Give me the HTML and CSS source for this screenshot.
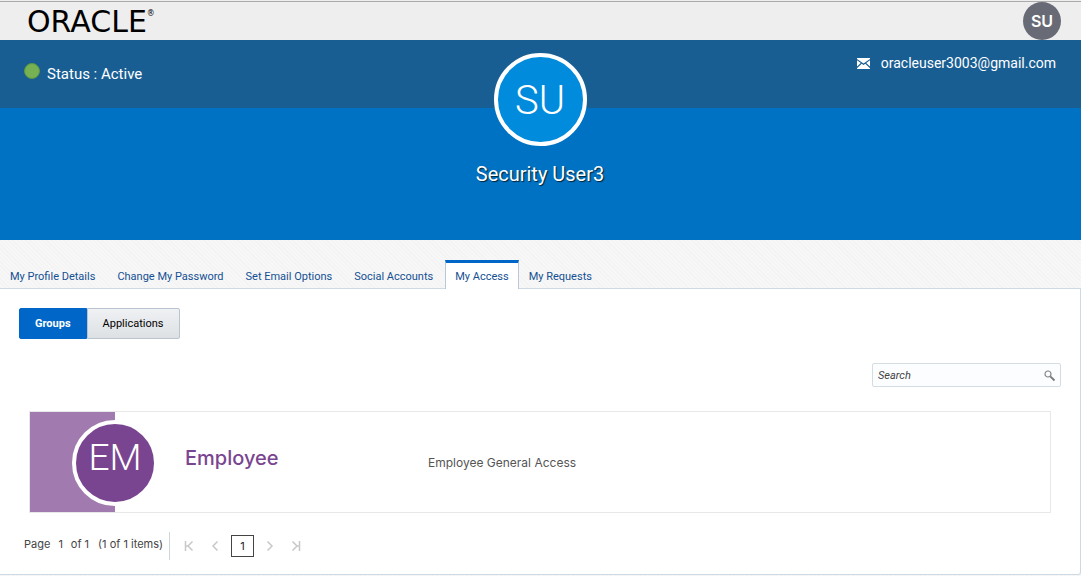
FILE: index.html
```html
<!DOCTYPE html>
<html lang="en">
<head>
<meta charset="utf-8">
<title>My Access</title>
<link rel="stylesheet" href="styles.css">
</head>
<body>
<header class="topbar">
  <a class="logo" href="#">ORACLE<sup class="logo-mark">®</sup></a>
  <button class="user-badge" type="button">SU</button>
</header>
<section class="banner">
  <p class="status"><span class="status-dot"></span>Status : Active</p>
  <div class="profile">
    <div class="profile-avatar">SU</div>
    <h1 class="profile-name">Security User3</h1>
  </div>
  <p class="email">
    <svg class="mail-icon" viewBox="0 0 13 11" aria-hidden="true"><path fill="#fff" d="M0 0h13v1L6.500 5.500 0 1zM0 2.200 3.800 5 0 8.500zM13 2.200 9.200 5 13 8.500zM0 10.200 4.700 5.700 6.500 6.900 8.300 5.700 13 10.200V11H0z"/></svg>
    <a class="email-link" href="mailto:oracleuser3003@gmail.com">oracleuser3003@gmail.com</a>
  </p>
</section>
<nav class="tabs">
  <a class="tab" href="#">My Profile Details</a>
  <a class="tab" href="#">Change My Password</a>
  <a class="tab" href="#">Set Email Options</a>
  <a class="tab" href="#">Social Accounts</a>
  <a class="tab tab-active" href="#" aria-current="page">My Access</a>
  <a class="tab" href="#">My Requests</a>
</nav>
<main class="panel">
  <div class="toggle">
    <button class="toggle-button toggle-selected" type="button">Groups</button>
    <button class="toggle-button" type="button">Applications</button>
  </div>
  <form class="search">
    <input class="search-input" type="text" placeholder="Search" aria-label="Search">
    <button class="search-button" type="button" aria-label="Run search">
      <svg class="search-icon" viewBox="0 0 12 12" aria-hidden="true"><circle cx="4" cy="4" r="3" fill="none" stroke="#858585" stroke-width="1.200"/><path d="M6.300 6.300 10.500 10.500" stroke="#777" stroke-width="1.800"/></svg>
    </button>
  </form>
  <article class="card">
    <div class="card-stripe"><div class="card-avatar">EM</div></div>
    <h2 class="card-title">Employee</h2>
    <p class="card-text">Employee General Access</p>
  </article>
  <footer class="pager">
    <p class="pager-info"><span>Page</span><span>1</span><span>of 1</span><span class="pager-items">(1 of 1 items)</span></p>
    <div class="pager-nav">
      <button class="pager-button" type="button" aria-label="First page"><svg class="pager-icon" viewBox="0 0 10 12" aria-hidden="true"><path d="M1.500 1v10M8.500 1.500 4 6l4.500 4.500M2 6h2"/></svg></button>
      <button class="pager-button" type="button" aria-label="Previous page"><svg class="pager-icon" viewBox="0 0 10 12" aria-hidden="true"><path d="M7.500 1.500 3 6l4.500 4.500"/></svg></button>
      <button class="pager-current" type="button">1</button>
      <button class="pager-button" type="button" aria-label="Next page"><svg class="pager-icon" viewBox="0 0 10 12" aria-hidden="true"><path d="M2.500 1.500 7 6l-4.500 4.500"/></svg></button>
      <button class="pager-button" type="button" aria-label="Last page"><svg class="pager-icon" viewBox="0 0 10 12" aria-hidden="true"><path d="M8.500 1v10M1.500 1.500 6 6l-4.500 4.500M6 6h2"/></svg></button>
    </div>
  </footer>
</main>
</body>
</html>
```
FILE: styles.css
```css
* { box-sizing: border-box; }
body {
  margin: 0;
  min-height: 100vh;
  font-family: Inter, "Liberation Sans", sans-serif;
  font-size: 11px;
  line-height: 16px;
  color: #444;
  background: repeating-linear-gradient(45deg, #f3f3f3 0 1px, #f7f7f7 1px 3px);
}
h1, h2, p { margin: 0; }
a { text-decoration: none; }
button { font: inherit; cursor: pointer; }

.topbar {
  display: flex;
  align-items: center;
  justify-content: space-between;
  height: 40px;
  padding: 2px 20px 0 27px;
  background: linear-gradient(#eee 1px, #aaa 1px 2px, #eee 2px);
}
.logo {
  display: flex;
  padding-top: 2px;
  font-family: "DejaVu Sans", sans-serif;
  font-size: 30px;
  line-height: 36px;
  color: #000;
}
.logo-mark { font-size: 8px; line-height: 20px; }
.user-badge {
  width: 38px;
  height: 38px;
  padding: 0;
  border: 0;
  border-radius: 50%;
  font-size: 16px;
  font-weight: 600;
  color: #fff;
  background: #686b76;
}

.banner {
  display: grid;
  grid-template-columns: 1fr auto 1fr;
  height: 200px;
  padding: 13px 25px 0 24px;
  color: #fff;
  background: linear-gradient(#195e93 68px, #0072c4 68px);
}
.status {
  display: flex;
  align-items: flex-end;
  align-self: start;
  gap: 7px;
  padding-top: 10px;
  font-family: Roboto, sans-serif;
  font-size: 15px;
  line-height: 20px;
}
.status-dot {
  width: 16px;
  height: 16px;
  margin-bottom: 5px;
  border: 1px solid #5d983e;
  border-radius: 50%;
  background: #76b154;
}
.profile {
  display: flex;
  flex-direction: column;
  align-items: center;
  gap: 14px;
}
.profile-avatar {
  width: 93px;
  height: 93px;
  border: 4px solid #fff;
  border-radius: 50%;
  font-family: Roboto, sans-serif;
  font-size: 40px;
  font-weight: 300;
  line-height: 87px;
  text-align: center;
  background: #008bdc;
}
.profile-name {
  font-family: Roboto, sans-serif;
  font-size: 20px;
  font-weight: 400;
  line-height: 28px;
  text-shadow: 1px 1px 1px #023;
}
.email {
  display: flex;
  align-items: center;
  align-self: start;
  justify-self: end;
  gap: 11px;
  padding-top: 2px;
  font-family: Roboto, sans-serif;
  font-size: 14px;
}
.mail-icon { width: 13px; height: 11px; }
.email-link { color: #fff; }

.tabs {
  display: flex;
  align-items: flex-end;
  height: 49px;
  margin-bottom: -1px;
  font-family: Roboto, sans-serif;
}
.tab {
  margin-right: 2px;
  padding: 3px 10px 2px;
  border-top: 3px solid transparent;
  line-height: 21px;
  color: #145093;
}
.tab-active {
  margin-right: 0;
  padding: 3px 9px 2px;
  border-right: 1px solid #b9c8d4;
  border-left: 1px solid #b9c8d4;
  border-top-color: #0067c9;
  background: #fff;
  position: relative;
}

.panel {
  display: flex;
  flex-direction: column;
  padding: 19px 19px 14px;
  border: 1px solid #cdd9e4;
  border-left: 0;
  border-radius: 0 0 3px 0;
  background: #fff;
}
.toggle { display: flex; font-family: Roboto, sans-serif; }
.toggle-button {
  height: 31px;
  padding: 0 15px;
  border: 1px solid #b9c4d0;
  border-radius: 0 2px 2px 0;
  color: #000;
  background: linear-gradient(#eff1f3, #dde1e4);
}
.toggle-selected {
  border-color: #0067c9;
  border-radius: 2px 0 0 2px;
  font-weight: 700;
  color: #fff;
  background: #0067c9;
}
.search {
  display: flex;
  align-items: center;
  align-self: flex-end;
  width: 189px;
  height: 24px;
  margin-top: 24px;
  border: 1px solid #d5dde3;
  border-radius: 2px;
  background: #fcfdff;
}
.search-input {
  flex: 1;
  min-width: 0;
  padding: 0 5px;
  border: 0;
  outline: 0;
  font: italic 11px Roboto, sans-serif;
  color: #444;
  background: transparent;
}
.search-input::placeholder { color: #444; opacity: 1; }
.search-button {
  display: flex;
  padding: 5px 4px 3px;
  border: 0;
  background: transparent;
}
.search-icon { width: 12px; height: 12px; }

.card {
  display: flex;
  align-items: center;
  height: 102px;
  margin: 24px 10px 0;
  border: 1px solid #e8e8e8;
}
.card-stripe {
  display: flex;
  align-items: center;
  width: 85px;
  height: 100px;
  padding: 2px 0 0 42px;
  background: #a17ab0;
}
.card-avatar {
  flex: none;
  width: 86px;
  height: 86px;
  border: 4px solid #fff;
  border-radius: 50%;
  font-family: Roboto, sans-serif;
  font-size: 37px;
  font-weight: 300;
  line-height: 68px;
  text-align: center;
  color: #fff;
  background: #7a4590;
}
.card-title {
  width: 243px;
  margin-left: 70px;
  padding-bottom: 8px;
  font-size: 20px;
  font-weight: 500;
  line-height: 28px;
  color: #7a4590;
}
.card-text { padding-top: 2px; font-size: 12px; color: #555; }

.pager {
  display: flex;
  height: 28px;
  margin: 19px 5px 0;
}
.pager-info {
  display: flex;
  gap: 8px;
  padding: 4px 6px 0 0;
  border-right: 1px solid #cdd6dd;
}
.pager-items { margin-left: 1px; }
.pager-nav {
  display: flex;
  align-items: center;
  gap: 6px;
  padding-left: 9px;
}
.pager-button {
  display: flex;
  justify-content: center;
  width: 20px;
  padding: 0;
  border: 0;
  background: transparent;
}
.pager-icon {
  width: 10px;
  height: 12px;
  fill: none;
  stroke: #c8c8c8;
  stroke-width: 1.500;
}
.pager-current {
  width: 23px;
  height: 22px;
  padding: 0;
  border: 1px solid #444;
  color: #222;
  background: #fff;
}
```
